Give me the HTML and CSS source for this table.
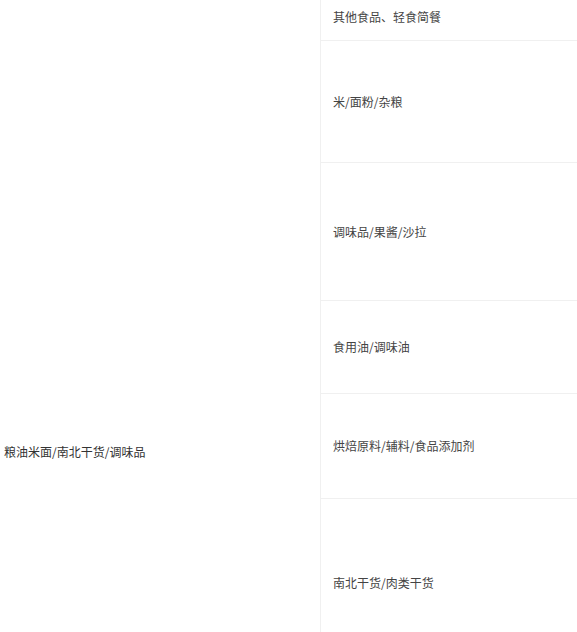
FILE: index.html
```html
<!DOCTYPE html>
<html lang="zh-CN">
<head>
    <meta charset="UTF-8">
    <title>类目</title>
    <link rel="stylesheet" href="styles.css">
</head>
<body>
    <div class="scroller">
        <table class="category-table">
            <tr class="row-1">
                <td class="parent-cell" rowspan="7">粮油米面/南北干货/调味品</td>
                <td class="child-cell">其他食品、轻食简餐</td>
            </tr>
            <tr class="row-2"><td class="child-cell">米/面粉/杂粮</td></tr>
            <tr class="row-3"><td class="child-cell">调味品/果酱/沙拉</td></tr>
            <tr class="row-4"><td class="child-cell">食用油/调味油</td></tr>
            <tr class="row-5"><td class="child-cell">烘焙原料/辅料/食品添加剂</td></tr>
            <tr class="row-6"><td class="child-cell">南北干货/肉类干货</td></tr>
            <tr class="row-7"><td class="child-cell"></td></tr>
        </table>
    </div>
</body>
</html>
```

FILE: styles.css
```css
html, body {
    margin: 0;
    height: 100%;
    overflow: hidden;
    background: #fff;
}
body {
    font-family: "Noto Sans CJK SC", "Noto Sans", sans-serif;
    font-size: 12px;
    color: #333;
}
/* list is scrolled a few pixels down */
.scroller {
    margin-top: -6px;
}
.category-table {
    width: 100%;
    border-collapse: collapse;
    table-layout: fixed;
}
.category-table td {
    padding: 0;
    vertical-align: middle;
    line-height: 16px;
}
.parent-cell {
    width: 316px;
    padding-left: 4px !important;
    border-right: 1px solid #f0f0f0;
}
.child-cell {
    padding-left: 12px !important;
    border-bottom: 1px solid #f0f0f0;
    color: #444;
}
.row-1 .child-cell { height: 46px; }
.row-2 .child-cell { height: 121px; }
.row-3 .child-cell { height: 137px; }
.row-4 .child-cell { height: 92px; }
.row-5 .child-cell { height: 104px; }
.row-6 .child-cell { height: 168px; }
.row-7 .child-cell { height: 242px; }
```
